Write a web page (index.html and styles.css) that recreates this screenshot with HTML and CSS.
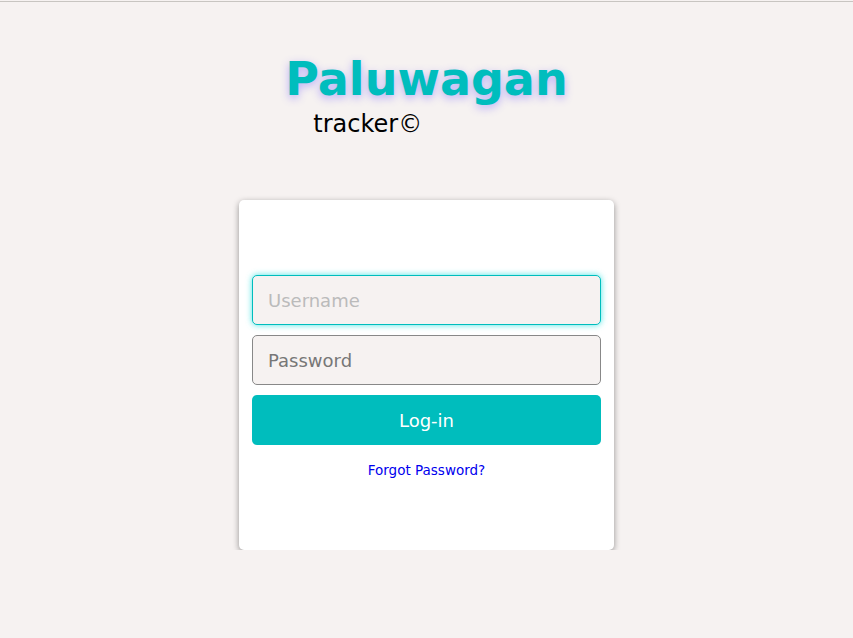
FILE: index.html
```html
<!DOCTYPE html>
<html lang="en">
<head>
    <meta charset="UTF-8">
    <meta name="viewport" content="width=device-width, initial-scale=1.0">
    <title>Paluwagan tracker</title>
    <link rel="stylesheet" href="styles.css">
</head>
<body>

    <div class="topline"></div>

    <div class="brand">
        <div class="brand-inner">
            <h1 class="logo">Paluwagan</h1>
            <div class="tagline">tracker©</div>
        </div>
    </div>

    <div class="login-card">
        <form class="login-form" onsubmit="return false;">
            <input class="field focused" type="text" placeholder="Username" autofocus>
            <input class="field" type="password" placeholder="Password">
            <button class="login-btn" type="submit">Log-in</button>
            <a class="forgot" href="#">Forgot Password?</a>
        </form>
    </div>

</body>
</html>
```

FILE: styles.css
```css
:root {
    --bg-color: #f6f2f1;
    --teal: #00bdbd;
    --text-color: #000;
}

body {
    font-family: 'DejaVu Sans', 'Noto Sans', sans-serif;
    background: var(--bg-color);
    color: var(--text-color);
    margin: 0;
    padding-top: 1px;
}

.topline {
    border-top: 1px solid #c8c5c1;
}

.brand {
    display: flex;
    justify-content: center;
    padding-top: 47px;
}

.brand-inner {
    display: flex;
    flex-direction: column;
}

.logo {
    margin: 0;
    font-size: 46px;
    font-weight: bold;
    line-height: 60px;
    color: var(--teal);
    text-shadow: 0 3px 8px rgba(110, 90, 255, 0.45);
}

.tagline {
    font-size: 24px;
    line-height: 30px;
    margin-left: 28px;
}

.login-card {
    width: 375px;
    height: 350px;
    box-sizing: border-box;
    margin: 61px auto 0;
    padding: 75px 13px 0;
    background: #fff;
    border-radius: 5px;
    box-shadow: 0 2px 6px rgba(0, 0, 0, 0.4);
}

.login-form {
    display: flex;
    flex-direction: column;
    gap: 10px;
}

.field {
    height: 50px;
    box-sizing: border-box;
    padding: 0 15px;
    font-family: inherit;
    font-size: 18px;
    color: #333;
    background: var(--bg-color);
    border: 1px solid #888;
    border-radius: 5px;
    outline: none;
}

.field::placeholder {
    color: #777;
}

.field.focused {
    border-color: var(--teal);
    box-shadow: 0 0 6px rgba(0, 220, 220, 0.7);
}

.field.focused::placeholder {
    color: #bbb;
}

.login-btn {
    height: 50px;
    font-family: inherit;
    font-size: 18px;
    color: #fff;
    background: var(--teal);
    border: none;
    border-radius: 5px;
    cursor: pointer;
}

.forgot {
    align-self: center;
    margin-top: 7px;
    font-size: 13.5px;
    color: #0000ee;
    text-decoration: none;
}
```
